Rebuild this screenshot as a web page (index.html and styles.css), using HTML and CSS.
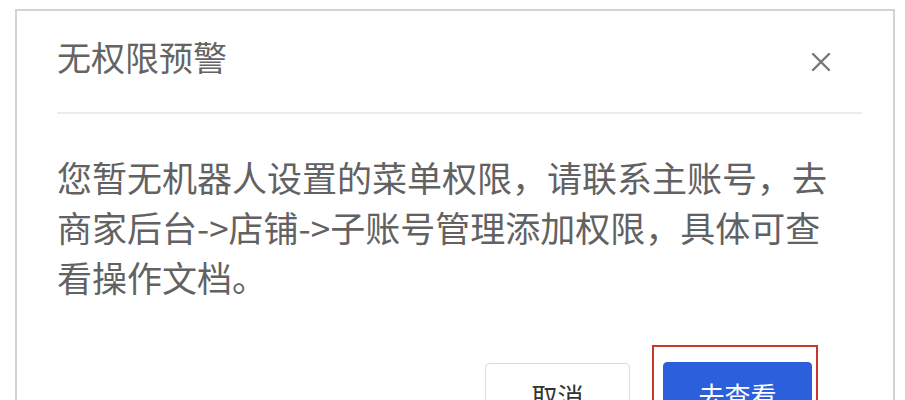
FILE: index.html
```html
<!DOCTYPE html>
<html lang="zh-CN">
<head>
<meta charset="utf-8">
<title>无权限预警</title>
<link rel="stylesheet" href="styles.css">
</head>
<body>
<div class="dialog">
  <div class="header">
    <div class="title">无权限预警</div>
    <span class="close" aria-label="关闭">
      <svg width="22" height="22" viewBox="0 0 22 22"><path d="M3 3 L19 19 M19 3 L3 19" stroke="#777" stroke-width="2.4" stroke-linecap="round" fill="none"/></svg>
    </span>
  </div>
  <div class="content">您暂无机器人设置的菜单权限，请联系主账号，去商家后台-&gt;店铺-&gt;子账号管理添加权限，具体可查看操作文档。</div>
  <div class="actions">
    <button class="btn btn-cancel">取消</button>
    <span class="highlight"><button class="btn btn-primary">去查看</button></span>
  </div>
</div>
</body>
</html>
```
FILE: styles.css
```css
html, body {
  margin: 0;
  padding: 0;
  background: #ffffff;
}
body {
  font-family: "Noto Sans CJK SC", "Noto Sans", sans-serif;
  padding-top: 9px;
  padding-left: 15px;
}
.dialog {
  width: 876px;
  height: 500px;
  border: 2px solid #d3d3d3;
  border-bottom: none;
  background: #fff;
}
.header {
  margin: 0 31px 0 40px;
  padding-top: 29px;
  padding-bottom: 38px;
  border-bottom: 2px solid #ececec;
  display: flex;
  align-items: center;
  justify-content: space-between;
}
.title {
  font-size: 34px;
  line-height: 34px;
  color: #646464;
}
.close {
  display: flex;
  margin-right: 30px;
  margin-top: 10px;
}
.content {
  margin: 38px 38px 0 40px;
  font-size: 35px;
  line-height: 50px;
  color: #626262;
}
.actions {
  display: flex;
  justify-content: flex-end;
  gap: 33px;
  margin-top: 61px;
  padding-right: 81px;
}
.btn {
  font-family: "Noto Sans CJK SC", "Noto Sans", sans-serif;
  font-size: 26px;
  line-height: 26px;
  height: 62px;
  padding: 19px 0 0;
  box-sizing: border-box;
  border-radius: 4px;
  display: flex;
  justify-content: center;
  align-items: flex-start;
}
.btn-cancel {
  width: 145px;
  background: #fff;
  border: 1px solid #dcdcdc;
  color: #333;
}
.btn-primary {
  width: 149px;
  background: #2b5fdb;
  border: 1px solid #2b5fdb;
  color: #fff;
  margin-top: -1px;
}
.highlight {
  position: relative;
  display: flex;
}
.highlight::after {
  content: "";
  position: absolute;
  top: -18px;
  left: -11px;
  right: -6px;
  bottom: -18px;
  border: 2px solid #c9372c;
  pointer-events: none;
}
```
